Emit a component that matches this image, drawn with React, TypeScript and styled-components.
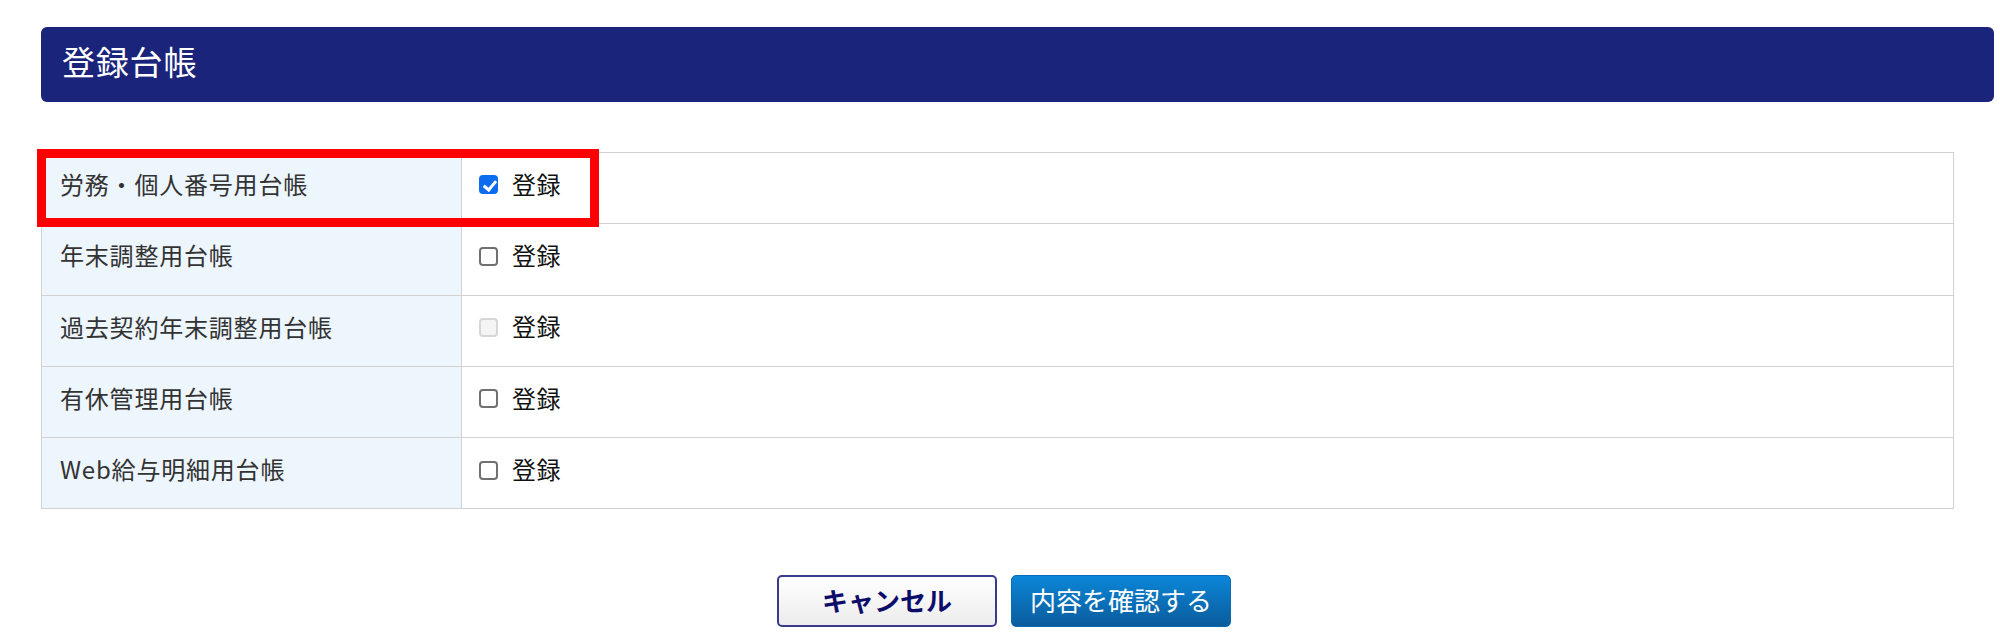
import React, { useState } from 'react';
import styled, { createGlobalStyle } from 'styled-components';

const GlobalStyle = createGlobalStyle`
  body {
    margin: 0;
    background: #fff;
    font-family: "Noto Sans CJK JP", "Noto Sans", sans-serif;
    color: #333;
  }
`;

const Page = styled.div`
  padding: 27px 6px 0 41px;
`;

const Heading = styled.h1`
  margin: 0;
  height: 75px;
  display: flex;
  align-items: center;
  padding: 0 0 7px 21px;
  box-sizing: border-box;
  background: #1b247b;
  border-radius: 6px;
  color: #fff;
  font-size: 33px;
  letter-spacing: 0.8px;
  font-weight: normal;
`;

const TableWrap = styled.div`
  position: relative;
  margin: 50px 40px 0 0;
`;

const Table = styled.table`
  width: 100%;
  border-collapse: collapse;
  font-size: 24px;
  letter-spacing: 0.8px;
`;

const Row = styled.tr`
  height: 71.3px;
`;

const LabelCell = styled.td`
  width: 420px;
  padding: 0 0 9px 18px;
  background: #edf5fd;
  border: 1px solid #d2d2d2;
  box-sizing: border-box;
`;

const ValueCell = styled.td`
  padding: 0 0 9px 17px;
  border: 1px solid #d2d2d2;
`;

const CheckLabel = styled.label`
  display: inline-flex;
  align-items: center;
  gap: 14px;
  color: #111;
  letter-spacing: 0.5px;
`;

const Check = styled.input`
  appearance: none;
  position: relative;
  width: 19px;
  height: 19px;
  margin: 3px 0 0;
  box-sizing: border-box;
  border: 2px solid #707070;
  border-radius: 4px;
  background: #fff;

  &:checked {
    background: #0b6cf0;
    border-color: #0b6cf0;
  }

  &:checked::after {
    content: '';
    position: absolute;
    left: 4.5px;
    top: 0.5px;
    width: 5px;
    height: 10px;
    border: solid #fff;
    border-width: 0 3px 3px 0;
    transform: rotate(40deg);
  }

  &:disabled {
    border-color: #d6d6d6;
    background: #f4f4f4;
  }
`;

const Highlight = styled.div`
  position: absolute;
  left: -4px;
  top: -3px;
  width: 562px;
  height: 78px;
  border: 9px solid #ff0000;
  box-sizing: border-box;
  pointer-events: none;
`;

const Actions = styled.div`
  display: flex;
  justify-content: center;
  gap: 14px;
  margin: 66px 40px 0 0;
  padding-left: 13px;
`;

const Button = styled.button<{ $primary?: boolean }>`
  width: 220px;
  height: 52px;
  border-radius: 5px;
  font-family: "Noto Sans CJK JP", sans-serif;
  font-size: 26px;
  cursor: pointer;
  border: ${(p) => (p.$primary ? '1px solid #0a6cb4' : '2px solid #3a3a8c')};
  background: ${(p) =>
    p.$primary
      ? 'linear-gradient(#0b86d8, #0a5c9c)'
      : 'linear-gradient(#ffffff, #ececec)'};
  color: ${(p) => (p.$primary ? '#fff' : '#0c0c6a')};
  font-weight: ${(p) => (p.$primary ? 'normal' : 'bold')};
  padding: 0 0 4px;
`;

interface Ledger {
  name: string;
  checked: boolean;
  disabled?: boolean;
}

const ledgers: Ledger[] = [
  { name: '労務・個人番号用台帳', checked: true },
  { name: '年末調整用台帳', checked: false },
  { name: '過去契約年末調整用台帳', checked: false, disabled: true },
  { name: '有休管理用台帳', checked: false },
  { name: 'Web給与明細用台帳', checked: false },
];

const App: React.FC = () => {
  const [state, setState] = useState(ledgers.map((l) => l.checked));

  const toggle = (i: number) => {
    setState((s) => s.map((v, j) => (j === i ? !v : v)));
  };

  return (
    <Page>
      <GlobalStyle />
      <Heading>登録台帳</Heading>
      <TableWrap>
        <Table>
          <tbody>
            {ledgers.map((l, i) => (
              <Row key={l.name}>
                <LabelCell>{l.name}</LabelCell>
                <ValueCell>
                  <CheckLabel>
                    <Check
                      type="checkbox"
                      checked={state[i]}
                      disabled={l.disabled}
                      onChange={() => toggle(i)}
                    />
                    登録
                  </CheckLabel>
                </ValueCell>
              </Row>
            ))}
          </tbody>
        </Table>
        <Highlight />
      </TableWrap>
      <Actions>
        <Button>キャンセル</Button>
        <Button $primary>内容を確認する</Button>
      </Actions>
    </Page>
  );
};

export default App;
